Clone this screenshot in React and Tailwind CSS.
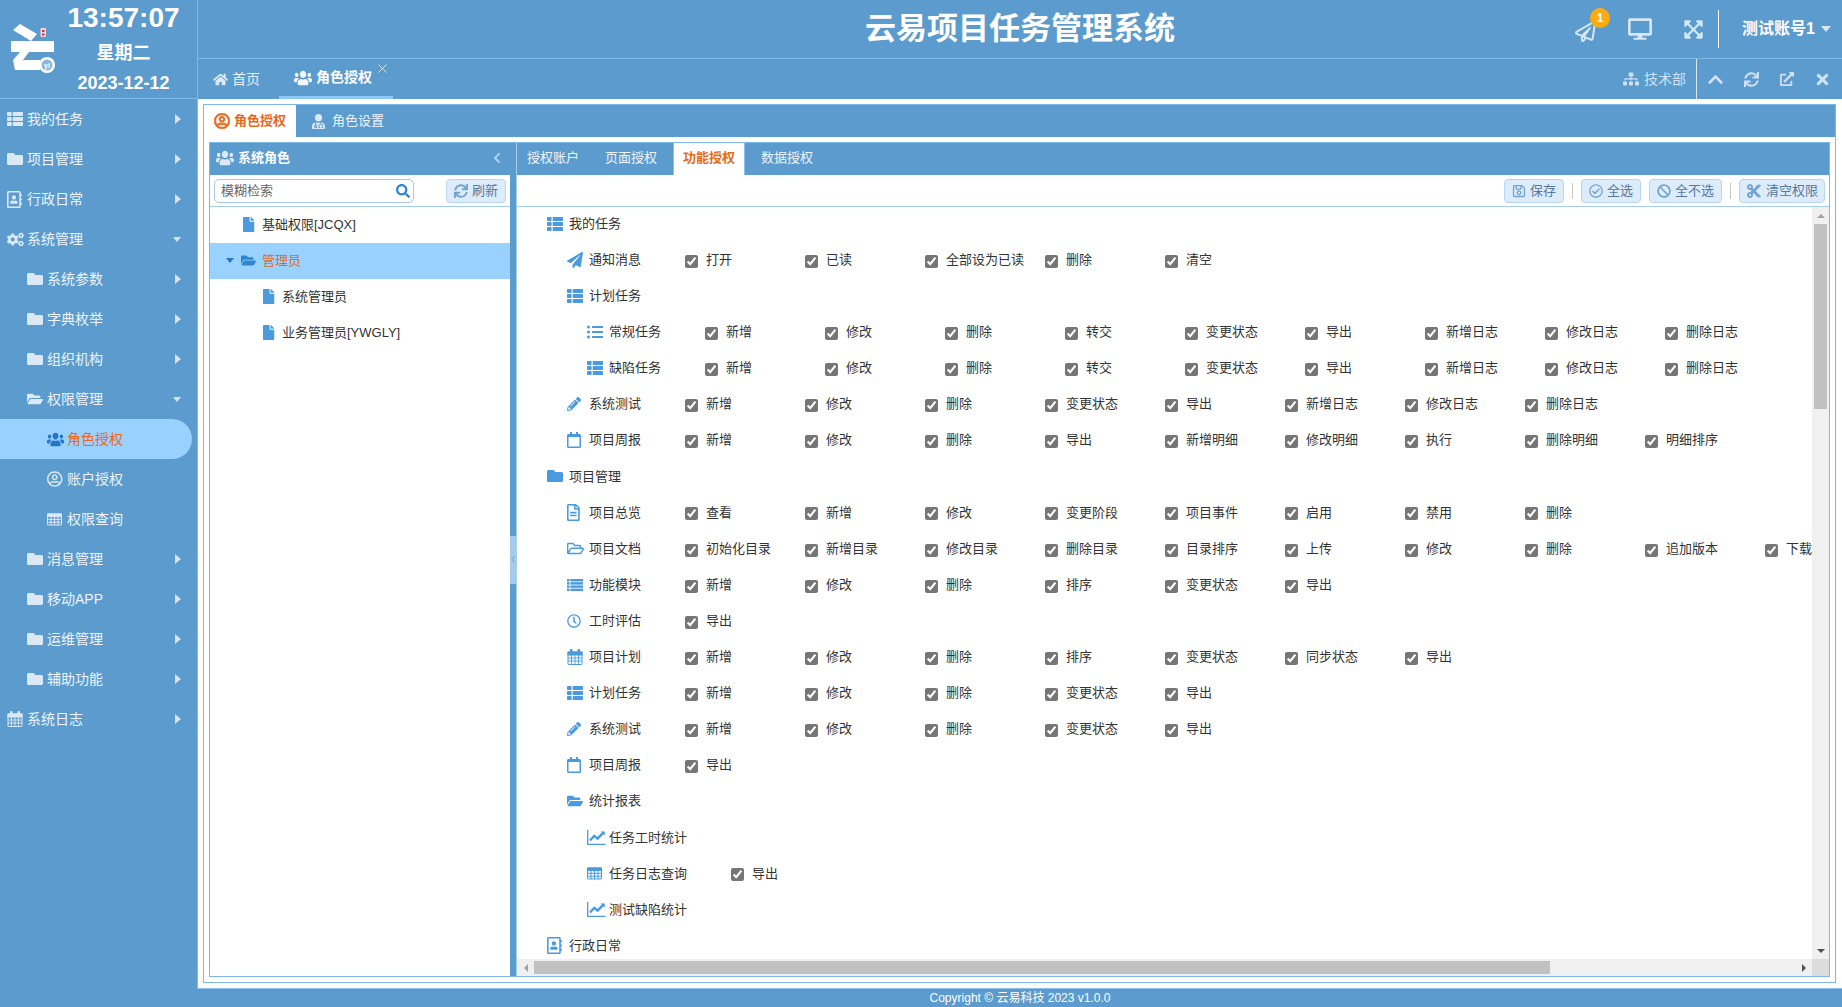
import React from "react";
import {
  FaThList, FaFolder, FaRegAddressBook, FaCogs, FaFolderOpen, FaUsers, FaRegUserCircle,
  FaRegPaperPlane, FaDesktop, FaExpandArrowsAlt, FaSitemap, FaChevronUp, FaSync, FaExternalLinkAlt, FaTimes,
  FaRegSave, FaRegCheckCircle, FaBan, FaCut, FaSearch, FaFile, FaPaperPlane, FaListUl, FaPencilAlt, FaRegCalendar,
  FaRegFileAlt, FaRegFolderOpen, FaRegClock, FaHome, FaUserMd, FaChevronLeft,
} from "react-icons/fa";

const font = { fontFamily: '"Liberation Sans","Noto Sans CJK SC",sans-serif' };
const LEFT = "xMinYMid meet";

function TableIco({ size = 15 }) {
  return (
    <svg width={size} height={size} viewBox="0 0 15 15" fill="none" stroke="currentColor">
      <rect x="0.5" y="2" width="14" height="11" rx="0.5" strokeWidth="1" />
      <rect x="0.5" y="2" width="14" height="2.4" fill="currentColor" strokeWidth="1" />
      <path d="M0.5 7.3H14.5M0.5 10.2H14.5M4 4V13M7.5 4V13M11 4V13" strokeWidth="1" />
    </svg>
  );
}

function CalIco({ size = 16 }) {
  return (
    <svg width={size} height={size} viewBox="0 0 16 16" fill="none" stroke="currentColor">
      <rect x="1" y="3" width="14" height="12.5" rx="0.5" strokeWidth="1" />
      <rect x="1" y="3" width="14" height="3" fill="currentColor" strokeWidth="1" />
      <rect x="3" y="0" width="2.6" height="4.5" rx="1" fill="currentColor" stroke="none" />
      <rect x="10.4" y="0" width="2.6" height="4.5" rx="1" fill="currentColor" stroke="none" />
      <path d="M1 9H15M1 12H15M4.5 6V15.5M8 6V15.5M11.5 6V15.5" strokeWidth="0.9" />
    </svg>
  );
}

function ListIco({ size = 16 }) {
  return (
    <svg width={size} height={size} viewBox="0 0 16 16">
      {[2, 5.2, 8.4, 11.6].map((y) => (
        <g key={y} fill="currentColor">
          <rect x="0" y={y} width="2.6" height="2.4" />
          <rect x="3.4" y={y} width="12.6" height="2.4" />
        </g>
      ))}
    </svg>
  );
}

function ChartIco() {
  return (
    <svg width="19" height="16" viewBox="0 0 19 16" fill="none" stroke="currentColor">
      <path d="M0.7 1V15.3H18.5" strokeWidth="1.3" />
      <path d="M3 11.5L7.3 6.8L10.6 9.6L16.6 3.4" strokeWidth="2.4" />
      <path d="M13.6 2.4H17.8V6.6Z" fill="currentColor" stroke="none" />
    </svg>
  );
}

const ico = (I, s) => () => <I size={s} preserveAspectRatio={LEFT} />;
const Users = ({ size = 18, className = "" }) => (
  <FaUsers size={size} preserveAspectRatio={LEFT} className={"scale-y-[1.15] " + className} />
);

const IThList = ico(FaThList, 16);
const IFolder = ico(FaFolder, 16);
const IFolderOpen = ico(FaFolderOpen, 16);
const IAddr = ico(FaRegAddressBook, 17);
const ICogs = ico(FaCogs, 17);
const IUserO = ico(FaRegUserCircle, 16);
const IPlane = ico(FaPaperPlane, 16);
const IUl = ico(FaListUl, 16);
const IPencil = ico(FaPencilAlt, 14);
const ICalO = ico(FaRegCalendar, 16);
const IFileT = ico(FaRegFileAlt, 17);
const IFolderO = ico(FaRegFolderOpen, 17);
const IClock = ico(FaRegClock, 14);
const IUsers = () => <Users size={17} />;

const menu = [
  { l: 0, t: "我的任务", I: IThList },
  { l: 0, t: "项目管理", I: IFolder },
  { l: 0, t: "行政日常", I: IAddr },
  { l: 0, t: "系统管理", I: ICogs, open: true },
  { l: 1, t: "系统参数", I: IFolder },
  { l: 1, t: "字典枚举", I: IFolder },
  { l: 1, t: "组织机构", I: IFolder },
  { l: 1, t: "权限管理", I: IFolderOpen, open: true },
  { l: 2, t: "角色授权", I: IUsers, active: true, leaf: true },
  { l: 2, t: "账户授权", I: IUserO, leaf: true },
  { l: 2, t: "权限查询", I: TableIco, leaf: true },
  { l: 1, t: "消息管理", I: IFolder },
  { l: 1, t: "移动APP", I: IFolder },
  { l: 1, t: "运维管理", I: IFolder },
  { l: 1, t: "辅助功能", I: IFolder },
  { l: 0, t: "系统日志", I: CalIco },
];

const taskOps = ["新增", "修改", "删除", "转交", "变更状态", "导出", "新增日志", "修改日志", "删除日志"];
const testOps = ["新增", "修改", "删除", "变更状态", "导出"];

const rows = [
  { l: 0, t: "我的任务", I: IThList },
  { l: 1, t: "通知消息", I: IPlane, ops: ["打开", "已读", "全部设为已读", "删除", "清空"] },
  { l: 1, t: "计划任务", I: IThList },
  { l: 2, t: "常规任务", I: IUl, ops: taskOps },
  { l: 2, t: "缺陷任务", I: IThList, ops: taskOps },
  { l: 1, t: "系统测试", I: IPencil, ops: ["新增", "修改", "删除", "变更状态", "导出", "新增日志", "修改日志", "删除日志"] },
  { l: 1, t: "项目周报", I: ICalO, ops: ["新增", "修改", "删除", "导出", "新增明细", "修改明细", "执行", "删除明细", "明细排序"] },
  { l: 0, t: "项目管理", I: IFolder },
  { l: 1, t: "项目总览", I: IFileT, ops: ["查看", "新增", "修改", "变更阶段", "项目事件", "启用", "禁用", "删除"] },
  { l: 1, t: "项目文档", I: IFolderO, ops: ["初始化目录", "新增目录", "修改目录", "删除目录", "目录排序", "上传", "修改", "删除", "追加版本", "下载"] },
  { l: 1, t: "功能模块", I: ListIco, ops: ["新增", "修改", "删除", "排序", "变更状态", "导出"] },
  { l: 1, t: "工时评估", I: IClock, ops: ["导出"] },
  { l: 1, t: "项目计划", I: CalIco, ops: ["新增", "修改", "删除", "排序", "变更状态", "同步状态", "导出"] },
  { l: 1, t: "计划任务", I: IThList, ops: testOps },
  { l: 1, t: "系统测试", I: IPencil, ops: testOps },
  { l: 1, t: "项目周报", I: ICalO, ops: ["导出"] },
  { l: 1, t: "统计报表", I: IFolderOpen },
  { l: 2, t: "任务工时统计", I: ChartIco },
  { l: 2, t: "任务日志查询", I: TableIco, ops: ["导出"] },
  { l: 2, t: "测试缺陷统计", I: ChartIco },
  { l: 0, t: "行政日常", I: IAddr },
];

const menuPad = ["pl-[7px]", "pl-[27px]", "pl-[47px]"];
const rowPad = ["pl-[30px]", "pl-[50px]", "pl-[70px]"];

function Logo() {
  return (
    <svg width="50" height="98" viewBox="0 0 50 98" className="overflow-visible shrink-0">
      <polygon points="13,30 20,24 37,34 31,41" fill="#fff" />
      <rect x="40.5" y="28" width="5.5" height="9" rx="1" fill="#f6d5d9" />
      <rect x="42" y="30" width="2.5" height="2" fill="#d9303e" />
      <rect x="42" y="33.5" width="2.5" height="2" fill="#d9303e" />
      <rect x="11" y="41" width="43" height="11" fill="#fff" />
      <polygon points="20,52 29,52 23,60 40,60 40,70 15,70 13,60" fill="#fff" />
      <circle cx="47" cy="65" r="8" fill="#fff" />
      <circle cx="47" cy="65" r="5.5" fill="#8db7dc" />
      <text x="47" y="67.5" fontSize="7" fontWeight="700" fill="#fff" textAnchor="middle">yi</text>
    </svg>
  );
}

function Sidebar() {
  return (
    <aside className="w-[197px] shrink-0 flex flex-col">
      <div className="h-[99px] shrink-0 border-b border-[#7db9e8] flex text-white font-bold">
        <Logo />
        <div className="flex-1 flex flex-col items-center">
          <div className="h-[36px] text-[28px] leading-[36px]">13:57:07</div>
          <div className="h-[34px] text-[18px] leading-[34px]">星期二</div>
          <div className="h-[27px] text-[18px] leading-[27px]">2023-12-12</div>
        </div>
      </div>
      {menu.map((m) => (
        <div
          key={m.t}
          className={
            "h-[40px] flex items-center text-[14px] " +
            menuPad[m.l] +
            (m.active ? " bg-[#99d1ff] rounded-r-[20px] w-[192px] text-[#e8681a]" : " w-[197px] pr-[16px] text-[#eef4fa]")
          }
        >
          <span className={"w-[20px] shrink-0 flex " + (m.active ? "text-[#2277c4]" : "text-[#dbe8f5]")}>
            <m.I />
          </span>
          <span className="flex-1">{m.t}</span>
          {!m.leaf &&
            (m.open ? (
              <span className="block w-0 h-0 border-x-[4.5px] border-x-transparent border-t-[5px] border-t-[#d3e3f2]" />
            ) : (
              <span className="block w-0 h-0 border-y-[5px] border-y-transparent border-l-[6px] border-l-[#d3e3f2]" />
            ))}
        </div>
      ))}
    </aside>
  );
}

function Header() {
  return (
    <header className="h-[59px] shrink-0 border-b border-[#7db9e8] flex items-center relative">
      <div className="absolute left-0 right-0 text-center text-white font-bold text-[31px]">云易项目任务管理系统</div>
      <div className="ml-auto flex items-center text-[#d5e6f5] relative">
        <span className="relative mr-[32px] mt-[4px] flex">
          <FaRegPaperPlane size={21} />
          <span className="absolute -top-[13px] left-[15px] w-[20px] h-[20px] rounded-full bg-[#fdab13] text-white text-[12px] font-bold flex items-center justify-center">1</span>
        </span>
        <FaDesktop size={24} className="mr-[31px]" />
        <FaExpandArrowsAlt size={21} className="mr-[14px]" />
        <span className="w-px h-[38px] bg-white mr-[23px]" />
        <span className="text-white font-bold text-[16px] mr-[6px]">测试账号1</span>
        <span className="block w-0 h-0 border-x-[5px] border-x-transparent border-t-[6px] border-t-[#d5e6f5] mr-[11px]" />
      </div>
    </header>
  );
}

function TabBar() {
  return (
    <div className="h-[40px] shrink-0 flex items-stretch text-[14px]">
      <div className="flex items-center pl-[15px] w-[81px] text-[#dbe8f5]">
        <FaHome size={15} className="mr-[4px]" />
        <span className="text-[#e8f0f8]">首页</span>
      </div>
      <div className="relative w-[114px] flex items-center pl-[15px] border-b-[3px] border-[#8cc8f8] text-white font-bold">
        <Users size={18} className="mr-[4px] text-[#f2f7fc]" />
        <span>角色授权</span>
        <svg width="9" height="9" viewBox="0 0 9 9" className="absolute top-[5px] right-[6px]" stroke="#d5e6f5" strokeWidth="1">
          <path d="M0.5 0.5L8.5 8.5M8.5 0.5L0.5 8.5" />
        </svg>
      </div>
      <div className="ml-auto flex items-center text-[#cfe2f3]">
        <FaSitemap size={16} className="mr-[5px]" />
        <span className="mr-[10px]">技术部</span>
        <span className="w-px self-stretch bg-[#d9e8f5] mr-[10px]" />
        <FaChevronUp size={17} className="mr-[20px]" />
        <FaSync size={15} className="mr-[21px]" />
        <FaExternalLinkAlt size={14} className="mr-[20px]" />
        <FaTimes size={17} className="mr-[11px]" />
      </div>
    </div>
  );
}

function ToolBtn({ I, children, w, s = 14 }) {
  return (
    <button className={"h-[24px] rounded-[4px] border border-[#b9d6f0] bg-[#ddecfb] text-[#55799c] text-[13px] flex items-center justify-center gap-[4px] " + w}>
      <I size={s} className="text-[#74a4d0]" />
      <span>{children}</span>
    </button>
  );
}

function LeftPanel() {
  const tree = [
    { t: "基础权限[JCQX]", p: "pl-[33px]", I: FaFile },
    { t: "管理员", p: "pl-[16px]", I: FaFolderOpen, active: true },
    { t: "系统管理员", p: "pl-[53px]", I: FaFile },
    { t: "业务管理员[YWGLY]", p: "pl-[53px]", I: FaFile },
  ];
  return (
    <div className="w-[300px] shrink-0 flex flex-col bg-white">
      <div className="h-[32px] shrink-0 bg-[#5b9bcd] flex items-center pl-[6px] pr-[6px] pb-[2px] text-white font-bold text-[13px]">
        <Users size={18} className="text-[#dbe8f5] mr-[4px]" />
        <span>系统角色</span>
        <FaChevronLeft size={12} className="ml-auto mr-[1px] text-[#b5d3ec]" />
      </div>
      <div className="h-[32px] shrink-0 border-b border-[#a5cdec] flex items-center px-[4px]">
        <div className="w-[200px] h-[24px] rounded-[5px] border border-[#a9cbe8] flex items-center pl-[6px] pr-[3px] text-[13px] text-[#666]">
          <span className="flex-1">模糊检索</span>
          <FaSearch size={14} className="text-[#2b88d8]" />
        </div>
        <div className="ml-auto">
          <ToolBtn I={FaSync} w="w-[60px]">刷新</ToolBtn>
        </div>
      </div>
      {tree.map((r) => (
        <div key={r.t} className={"h-[36px] flex items-center pb-[1px] text-[13px] " + r.p + (r.active ? " bg-[#99d1ff] text-[#e8681a]" : " text-[#333]")}>
          {r.active && <span className="block w-0 h-0 border-x-[4px] border-x-transparent border-t-[5px] border-t-[#2277c4] mr-[7px]" />}
          <span className={"flex shrink-0 " + (r.active ? "w-[21px] text-[#2f86cf]" : "w-[19px] text-[#4a9ae0]")}>
            <r.I size={15} preserveAspectRatio={LEFT} />
          </span>
          <span>{r.t}</span>
        </div>
      ))}
    </div>
  );
}

function Row({ r }) {
  return (
    <div className={"h-[36.1px] flex items-center text-[13px] text-[#333] whitespace-nowrap " + rowPad[r.l]}>
      <span className="w-[22px] shrink-0 flex text-[#4a9ae0]">
        <r.I />
      </span>
      <span className={r.ops ? "mr-[44px]" : ""}>{r.t}</span>
      {(r.ops || []).map((o, i) => (
        <label key={i} className="w-[120px] shrink-0 flex items-center">
          <input type="checkbox" checked readOnly className="w-[13px] h-[13px] m-0 mr-[8px] mt-[3px] accent-[#767676] shrink-0" />
          <span>{o}</span>
        </label>
      ))}
    </div>
  );
}

function Tri({ dir }) {
  const cls = {
    up: "border-x-[4px] border-x-transparent border-b-[4px] border-b-[#a3a3a3]",
    down: "border-x-[4px] border-x-transparent border-t-[4px] border-t-[#505050]",
    left: "border-y-[4px] border-y-transparent border-r-[4px] border-r-[#a3a3a3]",
    right: "border-y-[4px] border-y-transparent border-l-[4px] border-l-[#505050]",
  }[dir];
  return <span className={"block w-0 h-0 " + cls} />;
}

function RightPanel() {
  const tabs = ["授权账户", "页面授权", "功能授权", "数据授权"];
  return (
    <div className="flex-1 min-w-0 flex flex-col bg-white border-l border-[#a5cdec]">
      <div className="h-[32px] shrink-0 bg-[#5b9bcd] flex text-[13px]">
        {tabs.map((t, i) => (
          <div
            key={t}
            className={
              "w-[72px] mr-[6px] pb-[2px] flex items-center " +
              (i === 2 ? "bg-white text-[#e8681a] font-bold border-x border-[#8cc0ea] pl-[9px]" : "text-[#eef4fa] pl-[10px]")
            }
          >
            {t}
          </div>
        ))}
      </div>
      <div className="h-[32px] shrink-0 border-b border-[#a5cdec] flex items-center justify-end pr-[4px]">
        <ToolBtn I={FaRegSave} w="w-[60px]">保存</ToolBtn>
        <span className="w-px h-[16px] bg-[#c8c8c8] mx-[8px]" />
        <ToolBtn I={FaRegCheckCircle} w="w-[60px] mr-[8px]">全选</ToolBtn>
        <ToolBtn I={FaBan} w="w-[73px]">全不选</ToolBtn>
        <span className="w-px h-[16px] bg-[#c8c8c8] mx-[8px]" />
        <ToolBtn I={FaCut} s={16} w="w-[86px]">清空权限</ToolBtn>
      </div>
      <div className="flex-1 min-h-0 flex flex-col">
        <div className="flex-1 min-h-0 flex">
          <div className="flex-1 min-w-0 overflow-hidden -mt-[1.4px]">
            {rows.map((r, i) => (
              <Row key={i} r={r} />
            ))}
          </div>
          <div className="w-[17px] shrink-0 bg-[#f1f0f0] flex flex-col items-center">
            <span className="h-[17px] flex items-center justify-center"><Tri dir="up" /></span>
            <div className="w-[13px] h-[185px] bg-[#c1c1c1]" />
            <span className="mt-auto h-[17px] flex items-center justify-center"><Tri dir="down" /></span>
          </div>
        </div>
        <div className="h-[17px] shrink-0 flex">
          <div className="flex-1 min-w-0 bg-[#f1f0f0] flex items-center">
            <span className="w-[17px] flex items-center justify-center"><Tri dir="left" /></span>
            <div className="w-[1016px] h-[13px] bg-[#c1c1c1]" />
            <span className="ml-auto w-[17px] flex items-center justify-center"><Tri dir="right" /></span>
          </div>
          <div className="w-[17px] shrink-0 bg-[#dcdcdc]" />
        </div>
      </div>
    </div>
  );
}

function Content() {
  return (
    <div className="flex-1 min-h-0 bg-white pt-[5px] pb-[5px] pl-[5px] pr-[6px] border-b border-[#8cc0ea]">
      <div className="h-full border border-[#7db9e8] flex flex-col">
        <div className="h-[32px] shrink-0 bg-[#5b9bcd] flex text-[13px]">
          <div className="w-[92px] h-[32px] bg-white flex items-center pl-[10px] text-[#e8681a] font-bold">
            <FaRegUserCircle size={16} stroke="currentColor" strokeWidth={24} className="mr-[4px]" />
            <span>角色授权</span>
          </div>
          <div className="flex items-center pl-[15px] text-[#eef4fa]">
            <FaUserMd size={15} className="mr-[6px] text-[#dbe8f5]" />
            <span>角色设置</span>
          </div>
        </div>
        <div className="flex-1 min-h-0 p-[5px] pr-[5px]">
          <div className="h-full border border-[#7db9e8] flex">
            <LeftPanel />
            <div className="w-[6px] shrink-0 bg-[#5b9bcd] flex items-center">
              <div className="w-[6px] h-[48px] bg-[#a9c9e9] flex items-center justify-center">
                <FaChevronLeft size={7} className="text-[#7fb0dd]" />
              </div>
            </div>
            <RightPanel />
          </div>
        </div>
      </div>
    </div>
  );
}

export default function App() {
  return (
    <div className="w-screen h-screen overflow-hidden flex bg-[#5b9bcd]" style={font}>
      <Sidebar />
      <main className="flex-1 min-w-0 flex flex-col">
        <div className="flex-1 min-h-0 flex flex-col border-l border-[#7db9e8]">
          <Header />
          <TabBar />
          <Content />
        </div>
        <footer className="h-[18px] shrink-0 pl-px text-center text-white text-[12px] leading-[18px]">Copyright © 云易科技 2023 v1.0.0</footer>
      </main>
    </div>
  );
}
